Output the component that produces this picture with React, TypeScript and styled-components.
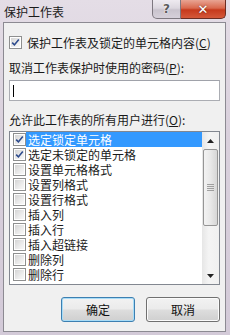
import styled, { createGlobalStyle } from 'styled-components';

const GlobalStyle = createGlobalStyle`
  html, body {
    margin: 0;
    padding: 0;
  }
  body {
    width: 230px;
    height: 335px;
    overflow: hidden;
    font-family: 'Noto Sans CJK SC', 'Microsoft YaHei', sans-serif;
    color: #1a1a1a;
  }
`;

const Frame = styled.div`
  width: 230px;
  height: 335px;
  box-sizing: border-box;
  padding: 0 4px 3px 3px;
  display: flex;
  flex-direction: column;
  background: linear-gradient(180deg, #e4dde6 0%, #d9d0dc 40%, #d3cad8 100%);
`;

const TitleBar = styled.div`
  height: 22px;
  flex-shrink: 0;
  display: flex;
  align-items: flex-start;
  justify-content: space-between;
`;

const Title = styled.span`
  font-size: 12px;
  line-height: 12px;
  padding: 6px 0 0 1px;
  color: #1b1b1b;
`;

const Caption = styled.div`
  display: flex;
  height: 19px;
`;

const CaptionButton = styled.div<{ $close?: boolean }>`
  width: ${(p) => (p.$close ? '45px' : '29px')};
  height: 19px;
  box-sizing: border-box;
  display: flex;
  align-items: center;
  justify-content: center;
  font-family: 'DejaVu Sans', sans-serif;
  font-weight: bold;
  font-size: ${(p) => (p.$close ? '13px' : '12px')};
  color: ${(p) => (p.$close ? '#fff' : '#5a5a5a')};
  border: 1px solid ${(p) => (p.$close ? '#6b2c22' : '#7e7880')};
  border-top: none;
  border-radius: ${(p) => (p.$close ? '0 0 5px 0' : '0 0 0 5px')};
  border-left: ${(p) => (p.$close ? 'none' : undefined)};
  text-shadow: ${(p) =>
    p.$close ? '0 0 2px rgba(0, 0, 0, 0.6)' : '0 0 2px #fff, 0 0 1px #fff'};
  background: ${(p) =>
    p.$close
      ? 'linear-gradient(180deg, #e8a493 0%, #d9694e 45%, #c6391c 55%, #d4583a 100%)'
      : 'linear-gradient(180deg, #eeeaf0 0%, #dcd7df 45%, #c9c3cd 55%, #d6d0da 100%)'};
`;

const Panel = styled.div`
  flex: 1;
  box-sizing: border-box;
  border: 1px solid #8c8a92;
  background: #f0f0f0;
  padding: 13px 5px 0 5px;
  display: flex;
  flex-direction: column;
  font-size: 12px;
`;

const CheckRow = styled.label`
  display: flex;
  align-items: center;
  height: 13px;
  gap: 5px;
  line-height: 13px;
`;

const Box = styled.span`
  width: 13px;
  height: 13px;
  box-sizing: border-box;
  flex-shrink: 0;
  border: 1px solid #8e8f8f;
  background: #fff;
  padding: 1px;
  position: relative;
  &::before {
    content: '';
    display: block;
    width: 100%;
    height: 100%;
    background: linear-gradient(135deg, #d5d5d5 0%, #ececec 60%, #f8f8f8 100%);
  }
  svg {
    position: absolute;
    left: 1px;
    top: 1px;
  }
`;

const Label = styled.div<{ $top: number }>`
  margin-top: ${(p) => p.$top}px;
  line-height: 16px;
  height: 16px;
`;

const U = styled.span`
  text-decoration: underline;
`;

const Input = styled.div`
  margin-top: 4px;
  height: 21px;
  box-sizing: border-box;
  border: 1px solid #abadb3;
  border-top-color: #a0a2aa;
  background: #fff;
  padding: 4px 0 0 3px;
`;

const Caret = styled.span`
  display: block;
  width: 1px;
  height: 12px;
  background: #000;
`;

const ListBox = styled.div`
  margin-top: 3px;
  height: 154px;
  box-sizing: border-box;
  border: 1px solid #828790;
  background: #fff;
  display: flex;
`;

const Items = styled.div`
  flex: 1;
  display: flex;
  flex-direction: column;
`;

const Item = styled.div`
  height: 15px;
  display: flex;
  align-items: center;
  padding-left: 3px;
  overflow: hidden;
`;

const ItemText = styled.span<{ $selected?: boolean }>`
  flex: 1;
  height: 15px;
  line-height: 15px;
  padding-left: 2px;
  overflow: hidden;
  background: ${(p) => (p.$selected ? '#3399ff' : 'transparent')};
  color: ${(p) => (p.$selected ? '#fff' : '#1a1a1a')};
`;

const ScrollBar = styled.div`
  width: 17px;
  display: flex;
  flex-direction: column;
  background: linear-gradient(90deg, #e6e6e6, #f4f4f4 40%, #f0f0f0);
`;

const ArrowButton = styled.div`
  height: 17px;
  display: flex;
  align-items: center;
  justify-content: center;
`;

const Track = styled.div`
  flex: 1;
  display: flex;
  flex-direction: column;
`;

const Thumb = styled.div`
  height: 77px;
  margin: 0 1px;
  box-sizing: border-box;
  border: 1px solid #959595;
  border-radius: 2px;
  background: linear-gradient(90deg, #f3f3f3 0%, #e8e8e8 50%, #d6d6d6 100%);
  display: flex;
  align-items: center;
  justify-content: center;
`;

const Grip = styled.span`
  width: 7px;
  height: 7px;
  background: repeating-linear-gradient(180deg, #6f6f6f 0 1px, transparent 1px 2px);
  opacity: 0.6;
`;

const Buttons = styled.div`
  margin-top: 12px;
  display: flex;
  justify-content: flex-end;
  gap: 11px;
`;

const Button = styled.div<{ $default?: boolean }>`
  width: 74px;
  height: 25px;
  box-sizing: border-box;
  border: 1px solid ${(p) => (p.$default ? '#3c7fb1' : '#707070')};
  border-radius: 3px;
  box-shadow: inset 0 0 0 1px ${(p) => (p.$default ? '#a8dcf7' : '#fbfbfb')};
  background: linear-gradient(180deg, #f2f2f2 0%, #ebebeb 48%, #dddddd 52%, #cfcfcf 100%);
  display: flex;
  align-items: center;
  justify-content: center;
  font-size: 12px;
  color: #111;
`;

const Check = () => (
  <svg width="9" height="9" viewBox="0 0 9 9">
    <path d="M1.2 4.6 L3.4 6.9 L7.8 1.4" fill="none" stroke="#2c4a8c" strokeWidth="1.6" />
  </svg>
);

const CheckBox = ({ checked }: { checked?: boolean }) => <Box>{checked && <Check />}</Box>;

const permissions = [
  { text: '选定锁定单元格', checked: true, selected: true },
  { text: '选定未锁定的单元格', checked: true },
  { text: '设置单元格格式' },
  { text: '设置列格式' },
  { text: '设置行格式' },
  { text: '插入列' },
  { text: '插入行' },
  { text: '插入超链接' },
  { text: '删除列' },
  { text: '删除行' },
];

export default function App() {
  return (
    <>
      <GlobalStyle />
      <Frame>
        <TitleBar>
          <Title>保护工作表</Title>
          <Caption>
            <CaptionButton>?</CaptionButton>
            <CaptionButton $close>✕</CaptionButton>
          </Caption>
        </TitleBar>
        <Panel>
          <CheckRow>
            <CheckBox checked />
            <span>
              保护工作表及锁定的单元格内容(<U>C</U>)
            </span>
          </CheckRow>
          <Label $top={11}>
            取消工作表保护时使用的密码(<U>P</U>):
          </Label>
          <Input>
            <Caret />
          </Input>
          <Label $top={11}>
            允许此工作表的所有用户进行(<U>O</U>):
          </Label>
          <ListBox>
            <Items>
              {permissions.map((p) => (
                <Item key={p.text}>
                  <CheckBox checked={p.checked} />
                  <ItemText $selected={p.selected}>{p.text}</ItemText>
                </Item>
              ))}
            </Items>
            <ScrollBar>
              <ArrowButton>
                <svg width="7" height="4" viewBox="0 0 7 4">
                  <path d="M3.5 0 L7 4 L0 4 Z" fill="#222" />
                </svg>
              </ArrowButton>
              <Track>
                <Thumb>
                  <Grip />
                </Thumb>
              </Track>
              <ArrowButton>
                <svg width="7" height="4" viewBox="0 0 7 4">
                  <path d="M0 0 L7 0 L3.5 4 Z" fill="#222" />
                </svg>
              </ArrowButton>
            </ScrollBar>
          </ListBox>
          <Buttons>
            <Button $default>确定</Button>
            <Button>取消</Button>
          </Buttons>
        </Panel>
      </Frame>
    </>
  );
}
